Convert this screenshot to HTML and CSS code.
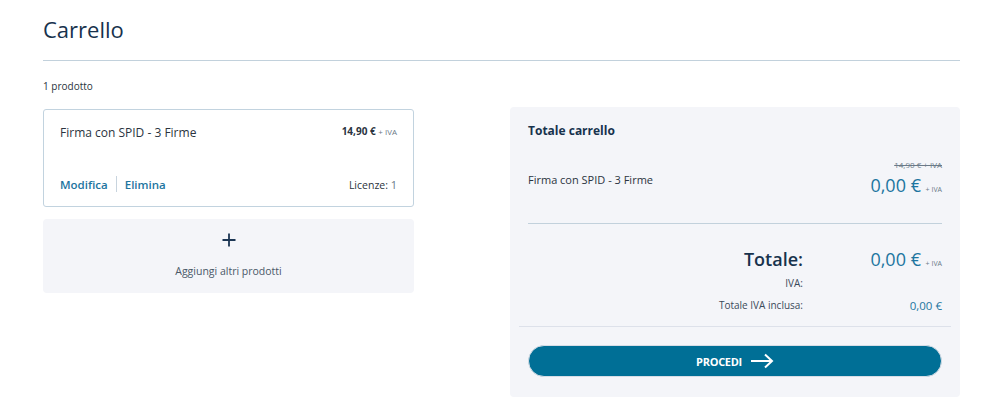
FILE: index.html
```html
<!DOCTYPE html>
<html lang="it">
<head>
<meta charset="utf-8">
<title>Carrello</title>
<link rel="stylesheet" href="styles.css">
</head>
<body>
<div class="page">
  <h1 class="title">Carrello</h1>
  <hr class="title-rule">
  <div class="count">1 prodotto</div>
  <div class="columns">
    <div class="left">
      <div class="card">
        <div class="card-top">
          <span class="prod-name">Firma con SPID - 3 Firme</span>
          <span class="prod-price">14,90 € <span class="iva">+ IVA</span></span>
        </div>
        <div class="card-bottom">
          <div class="links">
            <a class="link">Modifica</a>
            <span class="sep"></span>
            <a class="link">Elimina</a>
          </div>
          <span class="lic">Licenze: <span class="lic-n">1</span></span>
        </div>
      </div>
      <div class="add">
        <svg class="plus" width="14" height="14" viewBox="0 0 14 14"><path d="M7 0.5V13.5M0.5 7H13.5" stroke="#1b3553" stroke-width="1.8"/></svg>
        <span class="add-text">Aggiungi altri prodotti</span>
      </div>
    </div>
    <div class="summary">
      <div class="sum-title">Totale carrello</div>
      <div class="sum-item">
        <span class="sum-name">Firma con SPID - 3 Firme</span>
        <div class="sum-prices">
          <span class="old">14,90 € + IVA</span>
          <span class="new">0,00 € <span class="iva-s">+ IVA</span></span>
        </div>
      </div>
      <hr class="sum-rule">
      <div class="totals">
        <span class="t-label big">Totale:</span>
        <span class="t-value big">0,00 € <span class="iva-s">+ IVA</span></span>
        <span class="t-label">IVA:</span>
        <span class="t-value"></span>
        <span class="t-label">Totale IVA inclusa:</span>
        <span class="t-value blue">0,00 €</span>
      </div>
      <hr class="sum-rule2">
      <button class="btn">PROCEDI
        <svg class="arrow" width="24" height="16" viewBox="0 0 24 16"><path d="M1 8H22M15 1.5L22 8L15 14.5" fill="none" stroke="#fff" stroke-width="2"/></svg>
      </button>
    </div>
  </div>
</div>
</body>
</html>
```
FILE: styles.css
```css
* { box-sizing: border-box; }
body {
  margin: 0;
  background: #fff;
  font-family: "Open Sans", "Noto Sans", sans-serif;
  color: #2b3440;
}
.page {
  width: 917px;
  margin-left: 43px;
  padding-top: 12px;
}
.title {
  margin: 0;
  font-size: 22px;
  font-weight: 400;
  color: #17324d;
  line-height: 34px;
}
.title-rule {
  margin: 14px 0 0;
  border: 0;
  border-top: 1px solid #c2d1dc;
}
.count {
  font-size: 10px;
  margin-top: 18px;
  line-height: 14px;
  color: #2b3440;
}
.columns {
  display: flex;
  justify-content: space-between;
  align-items: flex-start;
  margin-top: 14px;
}
.left {
  width: 371px;
  margin-top: 2px;
  display: flex;
  flex-direction: column;
  gap: 12px;
}
.card {
  border: 1px solid #c2d3df;
  border-radius: 3px;
  height: 98px;
  padding: 13px 16px 14px 16px;
  display: flex;
  flex-direction: column;
  justify-content: space-between;
}
.card-top {
  display: flex;
  justify-content: space-between;
  align-items: flex-start;
}
.prod-name {
  font-size: 12px;
  color: #2b3440;
  line-height: 20px;
}
.prod-price {
  font-size: 10px;
  font-weight: 700;
  color: #2b3440;
  line-height: 16px;
}
.iva {
  font-size: 8px;
  font-weight: 400;
  color: #6b7a88;
}
.card-bottom {
  display: flex;
  justify-content: space-between;
  align-items: center;
}
.links {
  display: flex;
  align-items: center;
  gap: 8px;
}
.link {
  font-size: 11.5px;
  font-weight: 600;
  color: #1d75a0;
}
.sep {
  width: 1px;
  height: 16px;
  background: #c8d4de;
}
.lic {
  font-size: 10.5px;
  color: #2b3440;
}
.lic-n { font-size: 11px; color: #6b7a88; }
.add {
  background: #f4f5f9;
  border-radius: 4px;
  height: 74px;
  display: flex;
  flex-direction: column;
  align-items: center;
  padding-top: 14px;
  gap: 17px;
}
.add-text {
  font-size: 10.5px;
  color: #4a5868;
}
.summary {
  width: 450px;
  background: #f4f5f9;
  border-radius: 4px;
  padding: 16px 9px 20px;
}
.sum-title {
  font-size: 12px;
  font-weight: 700;
  color: #17324d;
  padding: 0 9px;
  line-height: 16px;
}
.sum-item {
  display: flex;
  justify-content: space-between;
  align-items: center;
  padding: 0 9px;
  margin-top: 20px;
}
.sum-name {
  font-size: 11px;
  color: #2b3440;
  margin-top: -3px;
}
.sum-prices {
  display: flex;
  flex-direction: column;
  align-items: flex-end;
}
.old {
  font-size: 8px;
  color: #6b7a88;
  text-decoration: line-through;
  line-height: 12px;
  margin-bottom: 2px;
}
.new {
  font-size: 18px;
  color: #1d75a0;
  line-height: 24px;
}
.iva-s {
  font-size: 7px;
  color: #6b7a88;
}
.sum-rule {
  margin: 21px 9px 0;
  border: 0;
  border-top: 1px solid #c2d1dc;
}
.totals {
  display: grid;
  grid-template-columns: 1fr 139px;
  grid-auto-rows: 22px;
  grid-template-rows: 26px;
  padding: 0 9px;
  margin-top: 22px;
  align-items: center;
}
.t-label {
  text-align: right;
  font-size: 10px;
  color: #3b4a5a;
}
.t-value {
  text-align: right;
  font-size: 11.5px;
}
.t-label.big {
  font-size: 18px;
  font-weight: 600;
  color: #17324d;
}
.t-value.big {
  font-size: 18px;
  color: #1d75a0;
}
.blue { color: #1d75a0; }
.sum-rule2 {
  margin: 10px 0 0;
  border: 0;
  border-top: 1px solid #dde1ea;
}
.btn {
  display: flex;
  align-items: center;
  justify-content: center;
  gap: 8px;
  width: 414px;
  margin: 18px 9px 0;
  height: 32px;
  border: 1px solid #d6dde6;
  border-radius: 16px;
  background: #006f96;
  color: #fff;
  font-family: "Open Sans", sans-serif;
  font-weight: 700;
  font-size: 11px;
  letter-spacing: -0.3px;
}
```
